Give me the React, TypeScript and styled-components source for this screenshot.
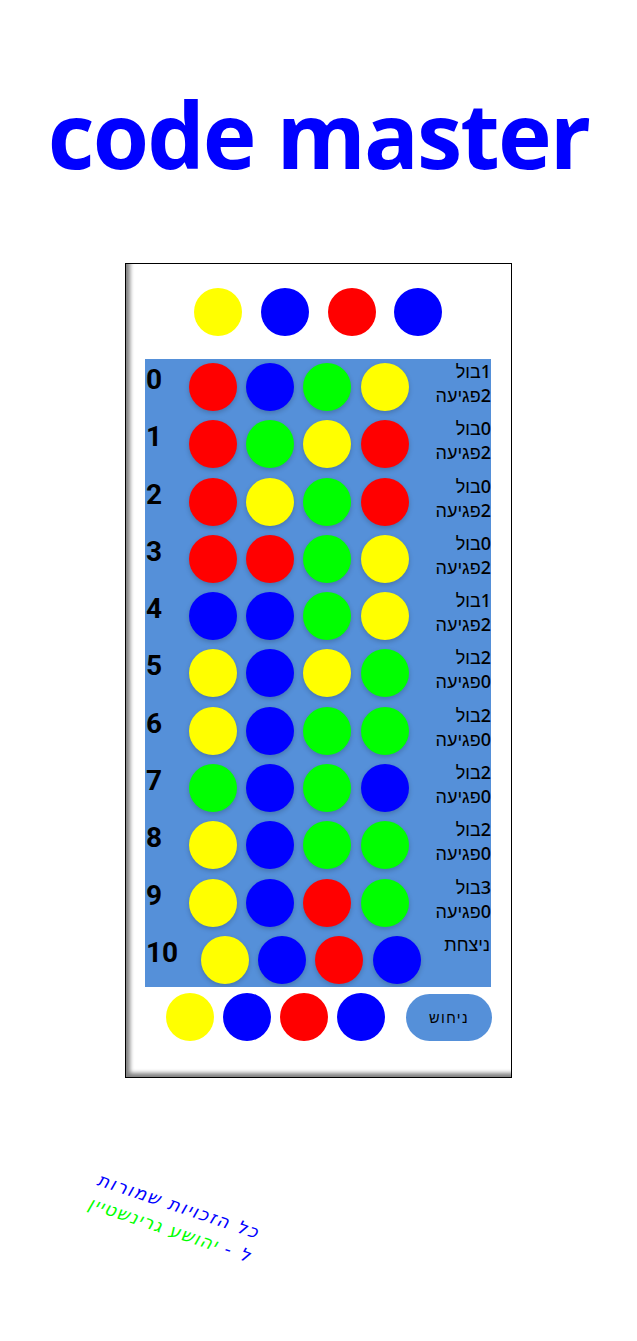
import { createGlobalStyle } from "styled-components";
import styled from "styled-components";

type Peg = "y" | "b" | "r" | "g";

interface Guess {
  pegs: Peg[];
  bull?: string;
  hit?: string;
  won?: boolean;
}

const COLORS: Record<Peg, string> = {
  y: "#ffff00",
  b: "#0000ff",
  r: "#ff0000",
  g: "#00ff00",
};

const guesses: Guess[] = [
  { pegs: ["r", "b", "g", "y"], bull: "1", hit: "2" },
  { pegs: ["r", "g", "y", "r"], bull: "0", hit: "2" },
  { pegs: ["r", "y", "g", "r"], bull: "0", hit: "2" },
  { pegs: ["r", "r", "g", "y"], bull: "0", hit: "2" },
  { pegs: ["b", "b", "g", "y"], bull: "1", hit: "2" },
  { pegs: ["y", "b", "y", "g"], bull: "2", hit: "0" },
  { pegs: ["y", "b", "g", "g"], bull: "2", hit: "0" },
  { pegs: ["g", "b", "g", "b"], bull: "2", hit: "0" },
  { pegs: ["y", "b", "g", "g"], bull: "2", hit: "0" },
  { pegs: ["y", "b", "r", "g"], bull: "3", hit: "0" },
  { pegs: ["y", "b", "r", "b"], won: true },
];

const secret: Peg[] = ["y", "b", "r", "b"];

const GlobalStyle = createGlobalStyle`
  html, body {
    margin: 0;
    padding: 0;
    background: #ffffff;
  }
  body {
    font-family: "Roboto", "Noto Sans", sans-serif;
  }
`;

const Page = styled.div`
  width: 637px;
  height: 1341px;
  overflow: hidden;
`;

const Title = styled.h1`
  margin: 0;
  height: 263px;
  padding-top: 76px;
  box-sizing: border-box;
  text-align: center;
  font-family: "Open Sans", sans-serif;
  font-size: 91px;
  font-weight: 700;
  line-height: 116px;
  letter-spacing: -1.9px;
  color: #0000ff;
`;

const Frame = styled.div`
  width: 387px;
  height: 815px;
  margin-left: 125px;
  box-sizing: border-box;
  border: 1px solid #000000;
  padding: 24px 19px 0;
  box-shadow: inset 5px -5px 4px -1px #808080;
`;

const Secret = styled.div`
  display: flex;
  gap: 18.8px;
  margin-left: 49px;
  margin-bottom: 23px;
`;

const Circle = styled.div<{ $color: string; $raised?: boolean }>`
  width: 48px;
  height: 48px;
  flex: none;
  border-radius: 50%;
  background: ${(p) => p.$color};
  box-shadow: ${(p) => (p.$raised ? "0 2px 5px rgba(0, 0, 0, 0.2)" : "none")};
`;

const Board = styled.div`
  width: 346px;
  height: 628px;
  background: #5590d9;
  overflow: hidden;
`;

const Row = styled.div`
  display: flex;
  align-items: flex-start;
  height: 57.3px;
  padding-top: 4px;
  box-sizing: border-box;
`;

const RowNumber = styled.div<{ $wide: boolean }>`
  width: ${(p) => (p.$wide ? "56px" : "44px")};
  flex: none;
  padding-left: 1px;
  box-sizing: border-box;
  font-size: 28px;
  font-weight: 700;
  line-height: 33px;
  color: #000000;
`;

const Pegs = styled.div`
  display: flex;
  gap: 9.2px;
`;

const Score = styled.div`
  margin-left: auto;
  margin-top: -4px;
  direction: rtl;
  text-align: right;
  font-family: "Noto Sans", "Liberation Sans", sans-serif;
  font-size: 18px;
  font-weight: 500;
  line-height: 24px;
  color: #000000;
  white-space: nowrap;
`;

const ScoreLine = styled.div`
  height: 24px;
`;

const WonLabel = styled.div`
  margin-left: auto;
  margin-top: -4px;
  margin-right: 1px;
  direction: rtl;
  font-family: "Noto Sans", "Liberation Sans", sans-serif;
  font-size: 18px;
  font-weight: 500;
  line-height: 24px;
  color: #000000;
`;

const InputRow = styled.div`
  display: flex;
  align-items: center;
  margin-top: 6px;
  padding-left: 21px;
`;

const InputPegs = styled.div`
  display: flex;
  gap: 9px;
`;

const GuessButton = styled.button`
  width: 86px;
  height: 47px;
  margin-left: auto;
  padding: 0;
  border: none;
  border-radius: 24px;
  background: #5590d9;
  font-family: "Noto Sans", "Liberation Sans", sans-serif;
  font-size: 14.5px;
  font-weight: 500;
  letter-spacing: 1.4px;
  color: #000000;
  direction: rtl;
`;

const Credits = styled.div`
  width: 180px;
  margin: 113px 0 0 80px;
  direction: rtl;
  transform: rotate(18.6deg);
  font-family: "DejaVu Sans", sans-serif;
  font-style: oblique;
  font-size: 18px;
  font-weight: 500;
  line-height: 25px;
  letter-spacing: 1.7px;
  color: #0000ff;
  white-space: nowrap;
`;

const CreditName = styled.span`
  color: #00ff00;
  letter-spacing: 1.3px;
`;

function App() {
  return (
    <Page>
      <GlobalStyle />
      <Title>code master</Title>
      <Frame>
        <Secret>
          {secret.map((peg, i) => (
            <Circle key={i} $color={COLORS[peg]} />
          ))}
        </Secret>
        <Board>
          {guesses.map((guess, i) => (
            <Row key={i}>
              <RowNumber $wide={i === 10}>{i}</RowNumber>
              <Pegs>
                {guess.pegs.map((peg, j) => (
                  <Circle key={j} $color={COLORS[peg]} $raised />
                ))}
              </Pegs>
              {guess.won ? (
                <WonLabel>ניצחת</WonLabel>
              ) : (
                <Score>
                  <ScoreLine>{guess.bull}בול</ScoreLine>
                  <ScoreLine>{guess.hit}פגיעה</ScoreLine>
                </Score>
              )}
            </Row>
          ))}
        </Board>
        <InputRow>
          <InputPegs>
            {secret.map((peg, i) => (
              <Circle key={i} $color={COLORS[peg]} />
            ))}
          </InputPegs>
          <GuessButton>ניחוש</GuessButton>
        </InputRow>
      </Frame>
      <Credits>
        כל הזכויות שמורות
        <br />
        ל - <CreditName>יהושע גרינשטיין</CreditName>
      </Credits>
    </Page>
  );
}

export default App;
